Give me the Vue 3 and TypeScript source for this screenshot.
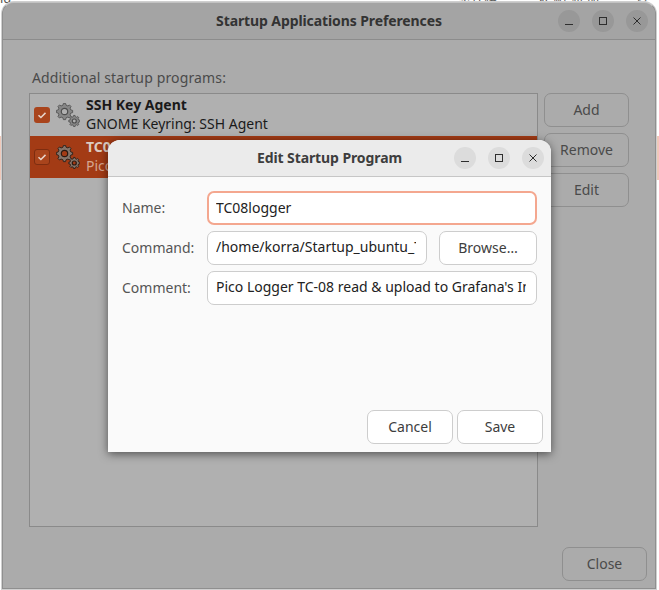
<script setup lang="ts">
import { ref } from 'vue';

interface StartupItem {
  name: string;
  comment: string;
  selected: boolean;
}

const items = ref<StartupItem[]>([
  { name: 'SSH Key Agent', comment: 'GNOME Keyring: SSH Agent', selected: false },
  { name: 'TC08logger', comment: 'Pico Logger TC-08 read & upload', selected: true },
]);

const name = ref('TC08logger');
const command = ref('/home/korra/Startup_ubuntu_TC08.sh');
const comment = ref("Pico Logger TC-08 read & upload to Grafana's InfluxDB");

// builds the toothed outline of a gear
function gearPath(cx: number, cy: number, outer: number, inner: number, teeth: number): string {
  const step = (Math.PI * 2) / teeth;
  const pt = (r: number, a: number) =>
    `${(cx + r * Math.cos(a)).toFixed(2)} ${(cy + r * Math.sin(a)).toFixed(2)}`;
  let d = '';
  for (let i = 0; i < teeth; i++) {
    const a = i * step;
    d += `${i === 0 ? 'M' : 'L'}${pt(inner, a - step * 0.3)}`;
    d += `L${pt(outer, a - step * 0.17)}L${pt(outer, a + step * 0.17)}L${pt(inner, a + step * 0.3)}`;
  }
  return d + 'Z';
}

const bigGear = gearPath(8.5, 8.5, 8.2, 6.5, 8);
const smallGear = gearPath(18.3, 18, 5.6, 4.4, 8);
</script>

<template>
  <div class="desktop">
    <div class="bg-text bg-left">id</div>
    <div class="bg-text bg-a">总计路</div>
    <div class="bg-text bg-b">发 帖 油 加</div>
    <div class="bg-text bg-c">转</div>
    <div class="bg-row"></div>

    <!-- parent window, dimmed while the dialog is open -->
    <section class="window parent">
      <header class="titlebar parent-bar">
        <span class="title">Startup Applications Preferences</span>
        <div class="win-btns">
          <button class="win-btn">
            <svg width="16" height="16" viewBox="0 0 16 16"><path d="M4 11.5h8" /></svg>
          </button>
          <button class="win-btn">
            <svg width="16" height="16" viewBox="0 0 16 16"><rect x="4.5" y="4.5" width="7" height="7" /></svg>
          </button>
          <button class="win-btn">
            <svg width="16" height="16" viewBox="0 0 16 16"><path d="M4.5 4.5l7 7M11.5 4.5l-7 7" /></svg>
          </button>
        </div>
      </header>
      <div class="parent-body">
        <label class="section-label">Additional startup programs:</label>
        <div class="parent-main">
          <div class="list">
            <div v-for="item in items" :key="item.name" class="row" :class="{ selected: item.selected }">
              <span class="check">
                <svg width="12" height="12" viewBox="0 0 12 12"><path d="M2.5 6.2l2.4 2.3 4.6-4.6" /></svg>
              </span>
              <svg class="gears" width="24" height="24" viewBox="0 0 24 24">
                <path class="gear" :d="bigGear" />
                <circle class="hole" cx="8.5" cy="8.5" r="3.2" />
                <path class="gear" :d="smallGear" />
                <circle class="hole" cx="18.3" cy="18" r="2" />
              </svg>
              <div class="row-text">
                <strong>{{ item.name }}</strong>
                <span>{{ item.comment }}</span>
              </div>
            </div>
          </div>
          <div class="side-btns">
            <button class="btn dim">Add</button>
            <button class="btn dim">Remove</button>
            <button class="btn dim">Edit</button>
          </div>
        </div>
        <div class="parent-foot">
          <button class="btn dim close-btn">Close</button>
        </div>
      </div>
    </section>

    <!-- edit dialog -->
    <section class="window dialog">
      <header class="titlebar dialog-bar">
        <span class="title">Edit Startup Program</span>
        <div class="win-btns">
          <button class="win-btn">
            <svg width="16" height="16" viewBox="0 0 16 16"><path d="M4 11.5h8" /></svg>
          </button>
          <button class="win-btn">
            <svg width="16" height="16" viewBox="0 0 16 16"><rect x="4.5" y="4.5" width="7" height="7" /></svg>
          </button>
          <button class="win-btn">
            <svg width="16" height="16" viewBox="0 0 16 16"><path d="M4.5 4.5l7 7M11.5 4.5l-7 7" /></svg>
          </button>
        </div>
      </header>
      <div class="dialog-body">
        <div class="form">
          <label>Name:</label>
          <div class="field focus"><span>{{ name }}</span></div>
          <label>Command:</label>
          <div class="cmd-line">
            <div class="field"><span>{{ command }}</span></div>
            <button class="btn browse">Browse…</button>
          </div>
          <label>Comment:</label>
          <div class="field"><span>{{ comment }}</span></div>
        </div>
        <div class="dialog-foot">
          <button class="btn foot-btn">Cancel</button>
          <button class="btn foot-btn">Save</button>
        </div>
      </div>
    </section>
  </div>
</template>

<style>
html,
body {
  margin: 0;
  background: #fff;
}
</style>

<style scoped>
.desktop {
  position: relative;
  width: 659px;
  height: 590px;
  overflow: hidden;
  background: #fff;
  font-family: "Noto Sans", "Noto Sans CJK SC", "Open Sans", sans-serif;
  font-size: 14px;
  color: #3d3d3d;
}

.bg-text {
  position: absolute;
  top: -10px;
  font-size: 13px;
  line-height: 16px;
  color: #555;
  white-space: nowrap;
}
.bg-left {
  left: 0;
}
.bg-a {
  left: 458px;
}
.bg-b {
  left: 537px;
}
.bg-c {
  left: 635px;
}
.bg-row {
  position: absolute;
  left: 0;
  right: 0;
  top: 136px;
  height: 44px;
  background: #f0c8b9;
}

.window {
  position: absolute;
  display: flex;
  flex-direction: column;
  box-sizing: border-box;
}

.parent {
  left: 2px;
  top: 2px;
  width: 654px;
  height: 587px;
  border-radius: 12px 12px 0 0;
  background: #ababab;
  border: 1px solid #8f8f8f;
  border-top-color: #c2c2c2;
  box-shadow: 0 0 0 1px #cfcfcf;
}

.titlebar {
  position: relative;
  display: flex;
  align-items: center;
  justify-content: center;
  flex: none;
  box-sizing: border-box;
  padding-bottom: 2px;
}
.title {
  font-weight: 700;
  letter-spacing: -0.1px;
}
.parent-bar {
  height: 37px;
  background: #a4a4a4;
  border-bottom: 1px solid #8c8c8c;
  border-radius: 11px 11px 0 0;
}
.parent-bar .title {
  color: #333;
}
.win-btns {
  position: absolute;
  right: 7px;
  top: 7px;
  display: flex;
  gap: 12px;
}
.win-btn {
  width: 22px;
  height: 22px;
  padding: 0;
  border: none;
  border-radius: 50%;
  background: #989898;
  display: flex;
  align-items: center;
  justify-content: center;
}
.win-btn svg {
  fill: none;
  stroke: #2e2e2e;
  stroke-width: 1;
}

.parent-body {
  flex: 1;
  min-height: 0;
  display: flex;
  flex-direction: column;
  padding: 27px 8px 0 26px;
}
.section-label {
  height: 22px;
  padding-left: 3px;
  line-height: 22px;
  letter-spacing: 0.14px;
  color: #4a4a4a;
  margin-bottom: 4px;
}
.parent-main {
  display: flex;
  gap: 6px;
}
.list {
  width: 509px;
  height: 434px;
  box-sizing: border-box;
  border: 1px solid #8a8a8a;
  background: #b0b0b0;
}
.row {
  height: 42px;
  display: flex;
  align-items: center;
  padding-left: 4px;
  box-sizing: border-box;
  color: #1a1a1a;
}
.row.selected {
  background: #a33b15;
  color: #d6a690;
}
.check {
  width: 16px;
  height: 16px;
  border-radius: 3px;
  background: #a9441c;
  display: flex;
  align-items: center;
  justify-content: center;
  flex: none;
}
.selected .check {
  border: 1px solid #7e2d10;
  box-sizing: border-box;
}
.check svg {
  fill: none;
  stroke: #e8d5cc;
  stroke-width: 1.5;
}
.gears {
  flex: none;
  margin: 0 6px;
}
.gear {
  fill: #878787;
  stroke: #5a5a5a;
  stroke-width: 1;
}
.hole {
  fill: #b0b0b0;
  stroke: #4e4e4e;
  stroke-width: 1.2;
}
.selected .gear {
  fill: #85756b;
  stroke: #33241c;
}
.selected .hole {
  fill: #a33b15;
  stroke: #2a1a12;
}
.row-text {
  display: flex;
  flex-direction: column;
  line-height: 19px;
  padding-bottom: 2px;
}
.row-text strong {
  font-weight: 700;
}
.selected .row-text strong {
  color: #dccbc2;
}

.btn {
  box-sizing: border-box;
  font: inherit;
  padding: 0 0 2px;
  border-radius: 7px;
  color: #3d3d3d;
  background: #fff;
  border: 1px solid #cdcdcd;
}
.btn.dim {
  background: #ababab;
  border-color: #8f8f8f;
  color: #4a4a4a;
}
.side-btns {
  display: flex;
  flex-direction: column;
  gap: 6px;
}
.side-btns .btn {
  width: 85px;
  height: 34px;
}
.parent-foot {
  display: flex;
  justify-content: flex-end;
  margin-top: 20px;
}
.close-btn {
  width: 85px;
  height: 34px;
}

.dialog {
  left: 108px;
  top: 140px;
  width: 443px;
  height: 312px;
  border-radius: 12px 12px 0 0;
  background: #fafafa;
  box-shadow: 0 2px 10px rgba(0, 0, 0, 0.55);
}
.dialog-bar {
  height: 37px;
  background: #ebebeb;
  border-bottom: 1px solid #c6c6c6;
  border-radius: 12px 12px 0 0;
}
.dialog-bar .win-btn {
  background: #dcdcdc;
}
.dialog-body {
  flex: 1;
  min-height: 0;
  display: flex;
  flex-direction: column;
  padding: 14px 8px 8px 14px;
}
.form {
  display: grid;
  grid-template-columns: 85px 330px;
  grid-auto-rows: 34px;
  row-gap: 6px;
  align-items: center;
}
.form label {
  color: #555;
  padding-bottom: 2px;
}
.cmd-line {
  display: flex;
  justify-content: space-between;
}
.cmd-line .field {
  width: 220px;
}
.field {
  box-sizing: border-box;
  height: 34px;
  padding: 0 10px 0 8px;
  border: 1px solid #cdcdcd;
  border-radius: 7px;
  background: #fff;
  color: #222;
  line-height: 30px;
  overflow: hidden;
  white-space: nowrap;
}
.field span {
  display: block;
  overflow: hidden;
}
.field.focus {
  border: 2px solid #f4a78f;
  line-height: 29px;
  padding: 0 7px;
}
.browse {
  width: 98px;
  height: 34px;
}
.dialog-foot {
  margin-top: auto;
  display: flex;
  justify-content: flex-end;
  gap: 4px;
}
.foot-btn {
  width: 86px;
  height: 34px;
}
</style>
